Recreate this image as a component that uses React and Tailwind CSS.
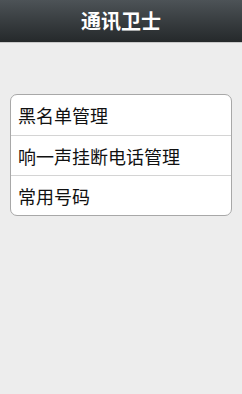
export default function App() {
  const items = ['黑名单管理', '响一声挂断电话管理', '常用号码'];

  return (
    <div
      className="w-[242px] h-[394px] bg-[#ededed] flex flex-col"
      style={{ fontFamily: '"Noto Sans CJK SC", "Noto Sans", sans-serif' }}
    >
      <div className="h-[43px] shrink-0 flex items-center justify-center bg-gradient-to-b from-[#4d5357] to-[#25292b] border-b border-[#c9c9c9]">
        <span className="text-white text-[20px] font-bold leading-none">通讯卫士</span>
      </div>

      <div className="mt-[51px] mx-[10px] w-[222px] bg-white border border-[#a8a8a8] rounded-[7px] overflow-hidden">
        {items.map((item, i) => (
          <div
            key={item}
            className={
              'h-[40px] flex items-center pl-[7px] text-[18px] text-[#111] leading-none' +
              (i > 0 ? ' border-t border-[#d4d4d4]' : '')
            }
          >
            {item}
          </div>
        ))}
      </div>
    </div>
  );
}
